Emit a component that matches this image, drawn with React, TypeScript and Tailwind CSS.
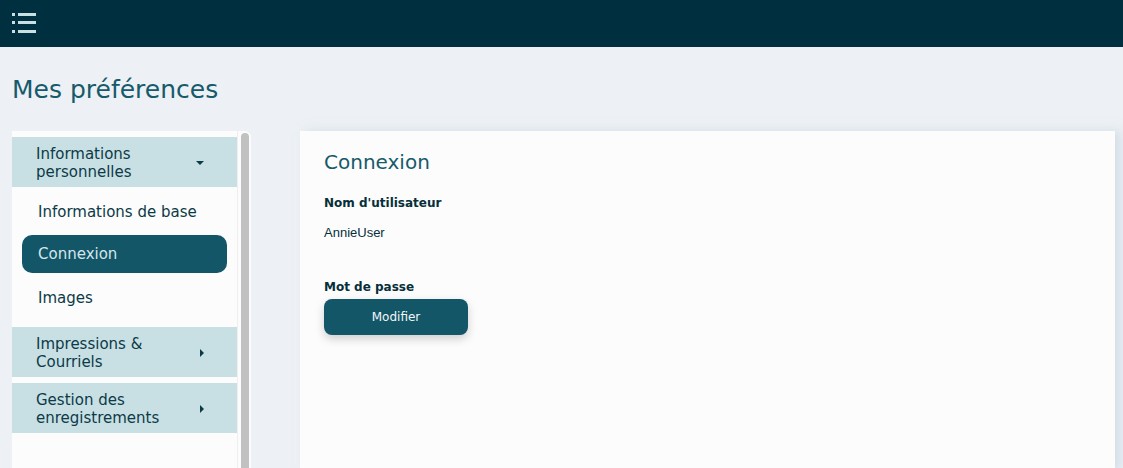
import { ReactNode } from "react";

const font = { fontFamily: '"DejaVu Sans", Verdana, sans-serif' };

const MenuIcon = () => (
  <svg width="26" height="22" viewBox="0 0 26 22" className="text-[#c9dfe4]">
    <rect x="0" y="0" width="3" height="3" fill="currentColor" />
    <rect x="6" y="0" width="18" height="3" fill="currentColor" />
    <rect x="0" y="8" width="3" height="3" fill="currentColor" />
    <rect x="6" y="8" width="18" height="3" fill="currentColor" />
    <rect x="0" y="17" width="3" height="3" fill="currentColor" />
    <rect x="6" y="17" width="18" height="3" fill="currentColor" />
  </svg>
);

const CaretDown = () => (
  <svg width="10" height="6" viewBox="0 0 10 6">
    <path d="M1 1h8L5 5z" fill="#0b3a48" />
  </svg>
);

const CaretRight = () => (
  <svg width="6" height="10" viewBox="0 0 6 10">
    <path d="M1 1v8l4-4z" fill="#0b3a48" />
  </svg>
);

const Section = ({ label, open }: { label: ReactNode; open?: boolean }) => (
  <div className="flex h-[50px] items-center justify-between bg-[#c8e0e4] pl-6 pr-8 pt-[1px] text-[15px] leading-[18px] text-[#0d3a47]">
    <span>{label}</span>
    {open ? <CaretDown /> : <CaretRight />}
  </div>
);

export default function App() {
  return (
    <div className="h-[468px] w-[1123px] overflow-hidden bg-[#edf1f5]" style={font}>
      {/* Top bar */}
      <header className="flex h-[47px] items-center bg-[#00303f] px-3">
        <MenuIcon />
      </header>

      <h1 className="px-3 pt-[27px] text-[25px] leading-[32px] text-[#165a6b]">
        Mes préférences
      </h1>

      <div className="mt-[25px] flex items-start gap-[49px] pl-3">
        {/* Sidebar */}
        <aside className="flex h-[340px] w-[239px] rounded-tr-md bg-[#fcfcfc]">
          <nav className="flex w-[225px] flex-col pt-[6px]">
            <Section open label={<>Informations<br />personnelles</>} />
            <div className="flex h-[48px] items-center pl-[26px] pt-[2px] text-[15px] text-[#0d3a47]">
              Informations de base
            </div>
            <div className="mx-[10px] flex h-[38px] items-center rounded-[10px] bg-[#135668] pl-4 text-[15px] text-[#d4e7eb]">
              Connexion
            </div>
            <div className="flex h-[48px] items-center pl-[26px] pt-[2px] text-[15px] text-[#0d3a47]">
              Images
            </div>
            <div className="mt-[6px] flex flex-col gap-[6px]">
              <Section label={<>Impressions &amp;<br />Courriels</>} />
              <Section label={<>Gestion des<br />enregistrements</>} />
            </div>
          </nav>
          <div className="flex w-[14px] justify-center border-l border-[#efefef] pt-[2px]">
            <div className="h-full w-[8px] rounded-t-full bg-[#c1c1c1]" />
          </div>
        </aside>

        {/* Main panel */}
        <main className="h-[340px] w-[815px] bg-[#fcfcfc] px-6 pt-[18px] shadow-[6px_0_10px_rgba(190,205,220,0.5)]">
          <h2 className="text-[20px] leading-[26px] text-[#165a6b]">Connexion</h2>
          <div className="mt-[20px] text-[12px] font-bold leading-[16px] text-[#062f3a]">
            Nom d'utilisateur
          </div>
          <div
            className="mt-[14px] text-[13px] leading-[16px] text-[#062f3a]"
            style={{ fontFamily: '"Liberation Sans", Arial, sans-serif' }}
          >
            AnnieUser
          </div>
          <div className="mt-[38px] text-[12px] font-bold leading-[16px] text-[#062f3a]">
            Mot de passe
          </div>
          <button className="mt-[4px] flex h-[36px] w-[144px] items-center justify-center rounded-lg bg-[#135668] text-[12px] text-[#f2f6f7] shadow-[0_4px_10px_rgba(0,0,0,0.18)]">
            Modifier
          </button>
        </main>
      </div>
    </div>
  );
}
